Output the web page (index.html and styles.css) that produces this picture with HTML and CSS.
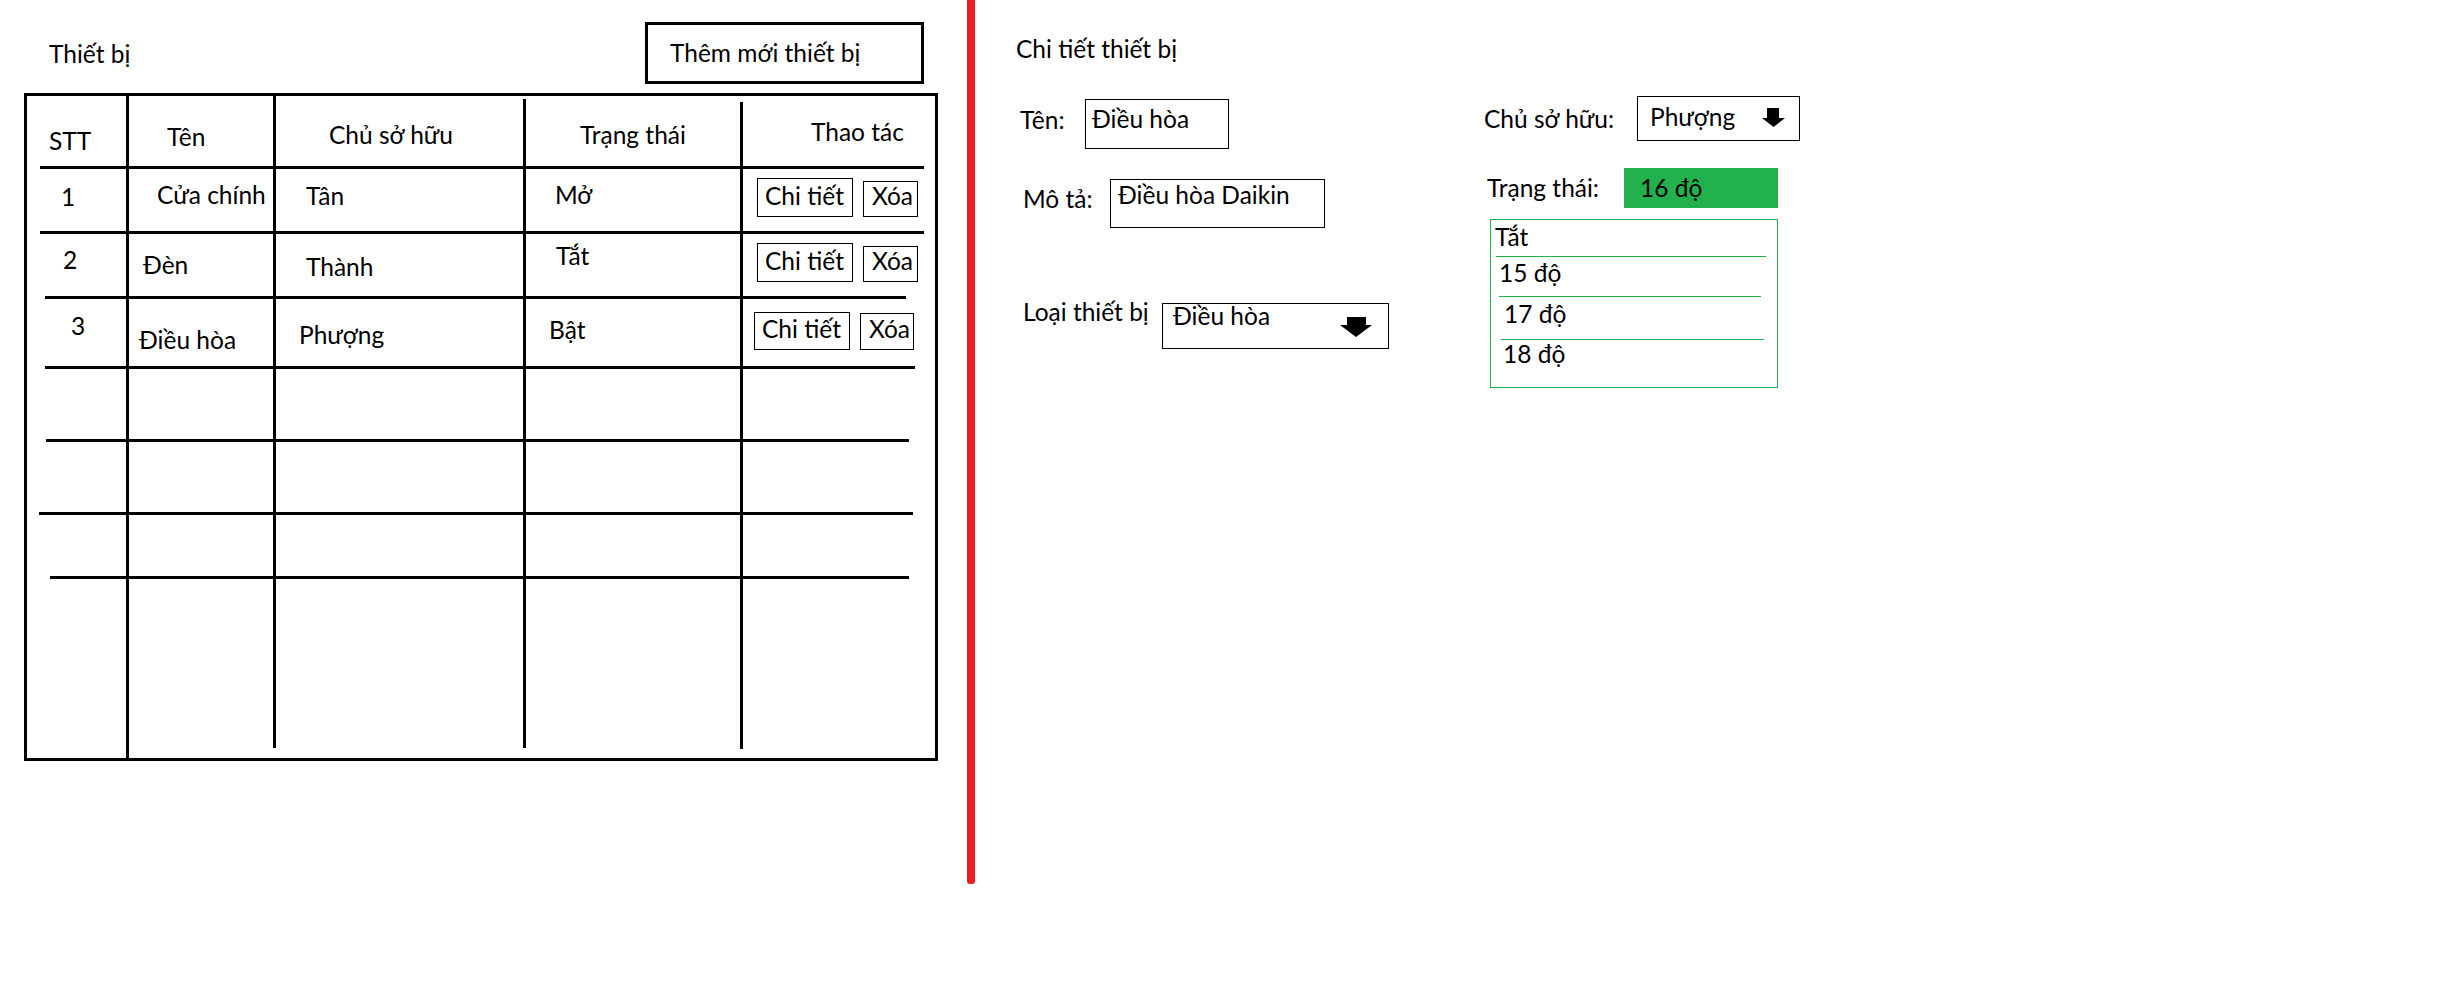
FILE: index.html
```html
<!DOCTYPE html>
<html lang="vi">
<head>
<meta charset="utf-8">
<title>Thiết bị</title>
<link rel="stylesheet" href="styles.css">
</head>
<body>
<div class="page">
  <section class="left">
    <div class="left-head">
      <div class="t-main">Thiết bị</div>
      <div class="add-btn">Thêm mới thiết bị</div>
    </div>
    <div class="table">
      <div class="cell p-h1">STT</div>
      <div class="cell v p-h2">Tên</div>
      <div class="cell v p-h3">Chủ sở hữu</div>
      <div class="cell v p-h4">Trạng thái</div>
      <div class="cell v p-h5">Thao tác</div>
      <div class="rule r1"></div>

      <div class="cell a1">1</div>
      <div class="cell v a2">Cửa chính</div>
      <div class="cell v a3">Tân</div>
      <div class="cell v a4">Mở</div>
      <div class="cell v ops ops-a"><span class="btn btn-d">Chi tiết</span><span class="btn btn-x">Xóa</span></div>
      <div class="rule r2"></div>

      <div class="cell b1">2</div>
      <div class="cell v b2">Đèn</div>
      <div class="cell v b3">Thành</div>
      <div class="cell v b4">Tắt</div>
      <div class="cell v ops ops-a"><span class="btn btn-d">Chi tiết</span><span class="btn btn-x">Xóa</span></div>
      <div class="rule r3"></div>

      <div class="cell c1">3</div>
      <div class="cell v c2">Điều hòa</div>
      <div class="cell v c3">Phượng</div>
      <div class="cell v c4">Bật</div>
      <div class="cell v ops ops-c"><span class="btn btn-d3">Chi tiết</span><span class="btn btn-x3">Xóa</span></div>
      <div class="rule r4"></div>

      <div class="cell"></div><div class="cell v"></div><div class="cell v"></div><div class="cell v"></div><div class="cell v"></div>
      <div class="rule r5"></div>
      <div class="cell"></div><div class="cell v"></div><div class="cell v"></div><div class="cell v"></div><div class="cell v"></div>
      <div class="rule r6"></div>
      <div class="cell"></div><div class="cell v"></div><div class="cell v"></div><div class="cell v"></div><div class="cell v"></div>
      <div class="rule r7"></div>
      <div class="cell"></div><div class="cell v"></div><div class="cell v short"></div><div class="cell v short"></div><div class="cell v short2"></div>
    </div>
  </section>

  <div class="divider"></div>

  <section class="right">
    <div class="r-title">Chi tiết thiết bị</div>
    <div class="form">
      <div class="form-left">
        <div class="frow row-ten">
          <div class="lbl-ten">Tên:</div>
          <div class="box inp-ten">Điều hòa</div>
        </div>
        <div class="frow row-mota">
          <div class="lbl-mota">Mô tả:</div>
          <div class="box inp-mota">Điều hòa Daikin</div>
        </div>
        <div class="frow row-loai">
          <div class="lbl-loai">Loại thiết bị</div>
          <div class="box sel sel-loai">
            <span>Điều hòa</span>
            <svg class="arrow-lg" width="32" height="20" viewBox="0 0 32 20"><path d="M7 0H26V8H32L16 20L0 8H7Z" fill="#000"/></svg>
          </div>
        </div>
      </div>
      <div class="form-right">
        <div class="frow row-chu">
          <div class="lbl-chu">Chủ sở hữu:</div>
          <div class="box sel sel-chu">
            <span>Phượng</span>
            <svg class="arrow-sm" width="23" height="19" viewBox="0 0 23 19"><path d="M5 0H17V10H23L11.5 19L0 10H5Z" fill="#000"/></svg>
          </div>
        </div>
        <div class="frow row-tt">
          <div class="lbl-tt">Trạng thái:</div>
          <div class="green"><span class="green-txt">16 độ</span></div>
        </div>
        <div class="list">
          <div class="li li1">Tắt</div>
          <div class="lline l1"></div>
          <div class="li li2">15 độ</div>
          <div class="lline l2"></div>
          <div class="li li3">17 độ</div>
          <div class="lline l3"></div>
          <div class="li li4">18 độ</div>
        </div>
      </div>
    </div>
  </section>
</div>
</body>
</html>
```

FILE: styles.css
```css
html, body {
  margin: 0;
  padding: 0;
  background: #fff;
}
body {
  font-family: Lato, "Noto Sans", sans-serif;
  font-size: 24.5px;
  line-height: 24px;
  color: #000;
}
.page {
  display: flex;
  width: 2440px;
  height: 992px;
  overflow: hidden;
}

/* ---------- left panel ---------- */
.left {
  flex: none;
  width: 967px;
  padding-left: 24px;
  box-sizing: border-box;
}
.left-head {
  display: flex;
  justify-content: space-between;
  align-items: flex-start;
  width: 914px;
  height: 93px;
}
.t-main {
  padding: 42px 0 0 25px;
  white-space: nowrap;
}
.add-btn {
  margin: 22px 14px 0 0;
  width: 279px;
  height: 62px;
  box-sizing: border-box;
  border: 3px solid #000;
  padding: 16px 0 0 22px;
  white-space: nowrap;
}

.table {
  width: 914px;
  height: 668px;
  box-sizing: border-box;
  border: 3px solid #000;
  display: grid;
  grid-template-columns: 99px 147px 250px 217px 195px;
  grid-template-rows: 70px 3px 62px 3px 62px 3px 67px 3px 70px 3px 70px 3px 61px 3px 179px;
}
.cell {
  box-sizing: border-box;
  white-space: nowrap;
  min-width: 0;
}
.v { border-left: 3px solid #000; }
.rule {
  grid-column: 1 / -1;
  background: #000;
}
.r1 { margin: 0 11px 0 13px; }
.r2 { margin: 0 11px 0 13px; }
.r3 { margin: 0 29px 0 18px; }
.r4 { margin: 0 20px 0 18px; }
.r5 { margin: 0 26px 0 19px; }
.r6 { margin: 0 22px 0 12px; }
.r7 { margin: 0 26px 0 23px; }
.short { align-self: start; height: 169px; }
.short2 { align-self: start; height: 170px; }

/* header cells */
.p-h1 { padding: 33px 0 0 22px; }
.p-h2 { padding: 29px 0 0 38px; }
.p-h3 { padding: 27px 0 0 53px; }
.p-h4 { padding: 24px 0 0 54px; margin-top: 3px; }
.p-h5 { padding: 18px 0 0 68px; margin-top: 6px; }

/* row 1 */
.a1 { padding: 16px 0 0 34px; }
.a2 { padding: 14px 0 0 28px; }
.a3 { padding: 15px 0 0 30px; }
.a4 { padding: 14px 0 0 29px; }
/* row 2 */
.b1 { padding: 14px 0 0 36px; }
.b2 { padding: 19px 0 0 14px; }
.b3 { padding: 21px 0 0 30px; }
.b4 { padding: 10px 0 0 30px; }
/* row 3 */
.c1 { padding: 15px 0 0 44px; }
.c2 { padding: 29px 0 0 10px; }
.c3 { padding: 24px 0 0 23px; }
.c4 { padding: 19px 0 0 23px; }

.ops {
  display: flex;
  align-items: flex-start;
}
.ops-a { padding-left: 14px; }
.ops-c { padding-left: 11px; }
.btn {
  display: block;
  box-sizing: border-box;
  border: 1px solid #000;
  white-space: nowrap;
}
.btn-d  { width: 96px; height: 39px; margin-top: 9px;  padding: 5px 0 0 7px; }
.btn-x  { width: 55px; height: 36px; margin-top: 12px; margin-left: 10px; padding: 2px 0 0 8px; }
.btn-d3 { width: 96px; height: 38px; margin-top: 13px; padding: 4px 0 0 7px; }
.btn-x3 { width: 54px; height: 37px; margin-top: 14px; margin-left: 10px; padding: 3px 0 0 8px; }

/* ---------- divider ---------- */
.divider {
  flex: none;
  width: 8px;
  height: 884px;
  background: #ed1c24;
  border-radius: 0 0 3px 3px;
}

/* ---------- right panel ---------- */
.right {
  flex: 1;
  padding: 37px 0 0 41px;
  box-sizing: border-box;
  white-space: nowrap;
}
.form { display: flex; }
.form-left { flex: none; width: 468px; }
.frow {
  display: flex;
  align-items: flex-start;
}
.box {
  box-sizing: border-box;
  border: 1px solid #000;
}
.sel {
  display: flex;
  justify-content: space-between;
  align-items: flex-start;
}

.row-ten { margin-top: 38px; }
.lbl-ten { margin-left: 4px; width: 65px; padding-top: 9px; }
.inp-ten { width: 144px; height: 50px; padding: 7px 0 0 6px; }

.row-mota { margin-top: 30px; }
.lbl-mota { margin-left: 7px; width: 87px; padding-top: 8px; }
.inp-mota { width: 215px; height: 49px; padding: 3px 0 0 7px; }

.row-loai { margin-top: 75px; }
.lbl-loai { margin-left: 7px; width: 139px; margin-top: -3px; }
.sel-loai { width: 227px; height: 46px; padding: 0 16px 0 10px; }
.arrow-lg { display: block; margin-top: 13px; }

.row-chu { margin-top: 35px; }
.lbl-chu { width: 153px; padding-top: 11px; }
.sel-chu { width: 163px; height: 45px; padding: 8px 14px 0 12px; }
.arrow-sm { display: block; margin-top: 3px; }

.row-tt { margin-top: 27px; }
.lbl-tt { margin-left: 3px; width: 137px; padding-top: 8px; }
.green {
  width: 154px;
  height: 40px;
  box-sizing: border-box;
  background: #22b14c;
  padding: 8px 0 0 16px;
}
.green-txt { display: block; }

.list {
  margin: 11px 0 0 6px;
  width: 288px;
  height: 169px;
  box-sizing: border-box;
  border: 1px solid #22b14c;
}
.lline { height: 1px; background: #22b14c; }
.li1 { margin-top: 5px; padding-left: 4px; }
.l1  { margin: 7px 0 0 5px; width: 270px; }
.li2 { margin-top: 4px; padding-left: 8px; }
.l2  { margin: 11px 0 0 8px; width: 262px; }
.li3 { margin-top: 5px; padding-left: 13px; }
.l3  { margin: 13px 0 0 10px; width: 263px; }
.li4 { margin-top: 2px; padding-left: 12px; }
```
